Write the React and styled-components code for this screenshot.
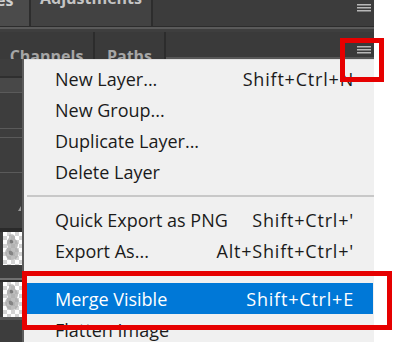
import React from 'react';
import styled, { createGlobalStyle } from 'styled-components';

const GlobalStyle = createGlobalStyle`
  html, body {
    margin: 0;
    padding: 0;
    background: #ffffff;
  }
`;

const items = [
  { label: 'New Layer...', keys: 'Shift+Ctrl+N' },
  { label: 'New Group...' },
  { label: 'Duplicate Layer...' },
  { label: 'Delete Layer' },
  { sep: true },
  { label: 'Quick Export as PNG', keys: "Shift+Ctrl+'" },
  { label: 'Export As...', keys: "Alt+Shift+Ctrl+'" },
  { sep: true },
  { label: 'Merge Visible', keys: 'Shift+Ctrl+E', active: true },
  { label: 'Flatten Image' },
];

// left edge of the layers panel, seen beside the menu
const bands = [
  { h: 17, c: '#3d3d3d' },
  { h: 2, c: '#2f2f2f' },
  { h: 14, c: '#484848' },
  { h: 1, c: '#5a5a5a' },
  { h: 35, c: '#3d3d3d' },
  { h: 1, c: '#5a5a5a' },
  { h: 8, c: '#3d3d3d' },
  { h: 1, c: '#5a5a5a' },
  { h: 34, c: '#3d3d3d' },
  { h: 1, c: '#5a5a5a' },
  { h: 55, c: '#3d3d3d', mark: true },
  { h: 4, c: '#2a2a2a' },
  { h: 33, thumb: true },
  { h: 13, c: '#3d3d3d' },
  { h: 2, c: '#707070' },
  { h: 2, c: '#2a2a2a' },
  { h: 35, thumb: true },
  { h: 3, c: '#555555' },
  { h: 30, c: '#3d3d3d' },
];

const Hamburger = () => (
  <svg width="14" height="8" viewBox="0 0 14 8">
    <rect x="0" y="0" width="14" height="1.5" fill="#b8b8b8" />
    <rect x="0" y="3" width="14" height="1.5" fill="#b8b8b8" />
    <rect x="0" y="6" width="14" height="1.5" fill="#b8b8b8" />
  </svg>
);

const Statue = () => (
  <svg width="19" height="30" viewBox="0 0 19 30">
    <path
      d="M6 3 C9 1 13 3 12 7 C15 9 16 13 14 16 C17 19 16 24 13 27 C9 29 4 28 3 24 C1 20 3 17 5 15 C3 12 4 8 6 6 Z"
      fill="#a8a8a8"
      opacity="0.75"
    />
    <path d="M7 8 C9 7 11 9 10 11 C8 12 6 11 7 8 Z" fill="#7a7a7a" />
    <path d="M6 19 C8 18 11 20 10 23 C8 24 5 23 6 19 Z" fill="#858585" />
  </svg>
);

export default function App() {
  return (
    <Frame>
      <GlobalStyle />
      <Screen>
        <TabRow>
          <TabStub>es</TabStub>
          <Tab $w={124}>
            <TabText $cut>Adjustments</TabText>
          </Tab>
          <TabFill>
            <Hamburger />
          </TabFill>
        </TabRow>
        <Rule $c="#5a5a5a" $h={2} />
        <Rule $c="#3e3e3e" $h={3} />
        <PanelRow>
          <PanelTab $w={95}>
            <TabText>Channels</TabText>
          </PanelTab>
          <PanelTab $w={71}>
            <TabText>Paths</TabText>
          </PanelTab>
          <TabFill $low>
            <Hamburger />
          </TabFill>
        </PanelRow>
        <Body>
          <Strip>
            {bands.map((b, i) =>
              b.thumb ? (
                <Thumb key={i} $h={b.h}>
                  <Checker>
                    <Statue />
                  </Checker>
                </Thumb>
              ) : (
                <Band key={i} $h={b.h} $c={b.c}>
                  {b.mark && <Mark />}
                </Band>
              )
            )}
          </Strip>
          <Menu>
            {items.map((it, i) =>
              it.sep ? (
                <Separator key={i} />
              ) : (
                <Item key={i} $active={it.active}>
                  <span>{it.label}</span>
                  {it.keys && <Keys>{it.keys}</Keys>}
                </Item>
              )
            )}
          </Menu>
        </Body>
      </Screen>
      <Callout $x={340} $y={38} $w={44} $h={44} />
      <Callout $x={22} $y={271} $w={370} $h={59} />
    </Frame>
  );
}

const Frame = styled.div`
  position: relative;
  width: 398px;
  height: 342px;
  overflow: hidden;
  background: #ffffff;
`;

const Screen = styled.div`
  width: 374px;
  height: 342px;
  display: flex;
  flex-direction: column;
  background: #3c3c3c;
  font-family: 'Open Sans', 'Noto Sans', sans-serif;
`;

const TabRow = styled.div`
  display: flex;
  height: 27px;
  border-bottom: 1px solid #2c2c2c;
  box-sizing: border-box;
`;

const TabStub = styled.div`
  width: 29px;
  background: #4b4b4b;
  color: #cfcfcf;
  font-size: 16px;
  font-weight: 700;
  line-height: 1;
  margin-top: -8px;
  text-indent: -4px;
  overflow: hidden;
`;

const Tab = styled.div`
  width: ${(p) => p.$w}px;
  background: #424242;
  border-left: 2px solid #2d2d2d;
  border-right: 2px solid #2d2d2d;
  box-sizing: border-box;
  overflow: hidden;
`;

const TabText = styled.div`
  font-size: 16px;
  font-weight: 700;
  color: ${(p) => (p.$cut ? '#c4c4c4' : '#a6a6a6')};
  text-align: center;
  line-height: 1;
  margin-top: ${(p) => (p.$cut ? '-10px' : '16px')};
`;

const TabFill = styled.div`
  flex: 1;
  display: flex;
  justify-content: flex-end;
  align-items: ${(p) => (p.$low ? 'flex-end' : 'flex-start')};
  padding: ${(p) => (p.$low ? '0 3px 3px 0' : '4px 3px 0 0')};
  border-bottom: ${(p) => (p.$low ? '2px solid #575757' : 'none')};
`;

const Rule = styled.div`
  height: ${(p) => p.$h}px;
  background: ${(p) => p.$c};
`;

const PanelRow = styled.div`
  display: flex;
  height: 27px;
  background: #3a3a3a;
`;

const PanelTab = styled.div`
  width: ${(p) => p.$w}px;
  border-right: 2px solid #2c2c2c;
  box-sizing: border-box;
  overflow: hidden;
`;

const Body = styled.div`
  flex: 1;
  display: flex;
  min-height: 0;
`;

const Strip = styled.div`
  width: 22px;
  display: flex;
  flex-direction: column;
  border-right: 2px solid #5c5c5c;
  overflow: hidden;
`;

const Band = styled.div`
  position: relative;
  flex: none;
  height: ${(p) => p.$h}px;
  background: ${(p) => p.$c};
`;

const Mark = styled.div`
  position: absolute;
  right: 1px;
  top: 33px;
  width: 0;
  height: 0;
  border-left: 3px solid transparent;
  border-bottom: 5px solid #9a9a9a;
`;

const Thumb = styled.div`
  flex: none;
  height: ${(p) => p.$h}px;
  padding-left: 3px;
  background: #3d3d3d;
`;

const Checker = styled.div`
  height: 100%;
  display: flex;
  justify-content: center;
  background-color: #ffffff;
  background-image: linear-gradient(45deg, #d4d4d4 25%, transparent 25%, transparent 75%, #d4d4d4 75%),
    linear-gradient(45deg, #d4d4d4 25%, transparent 25%, transparent 75%, #d4d4d4 75%);
  background-size: 8px 8px;
  background-position: 0 0, 4px 4px;
  overflow: hidden;
`;

const Menu = styled.div`
  flex: 1;
  padding-top: 3px;
  background: #f0f0f0;
  border-top: 1px solid #e0e0e0;
  box-sizing: border-box;
  overflow: hidden;
`;

const Item = styled.div`
  display: flex;
  justify-content: space-between;
  align-items: center;
  height: 31px;
  margin: 0 1px 0 3px;
  padding: 0 19px 0 28px;
  background: ${(p) => (p.$active ? '#0078d7' : 'transparent')};
  color: ${(p) => (p.$active ? '#ffffff' : '#1b1b1b')};
  font-size: 18px;
  white-space: nowrap;
`;

const Keys = styled.span`
  letter-spacing: 0.8px;
`;

const Separator = styled.div`
  height: 17px;
  display: flex;
  align-items: center;
  padding-left: 3px;

  &::after {
    content: '';
    flex: 1;
    height: 2px;
    background: #c8c8c8;
  }
`;

const Callout = styled.div`
  position: absolute;
  left: ${(p) => p.$x}px;
  top: ${(p) => p.$y}px;
  width: ${(p) => p.$w}px;
  height: ${(p) => p.$h}px;
  border: 5px solid #e60000;
  box-sizing: border-box;
`;
